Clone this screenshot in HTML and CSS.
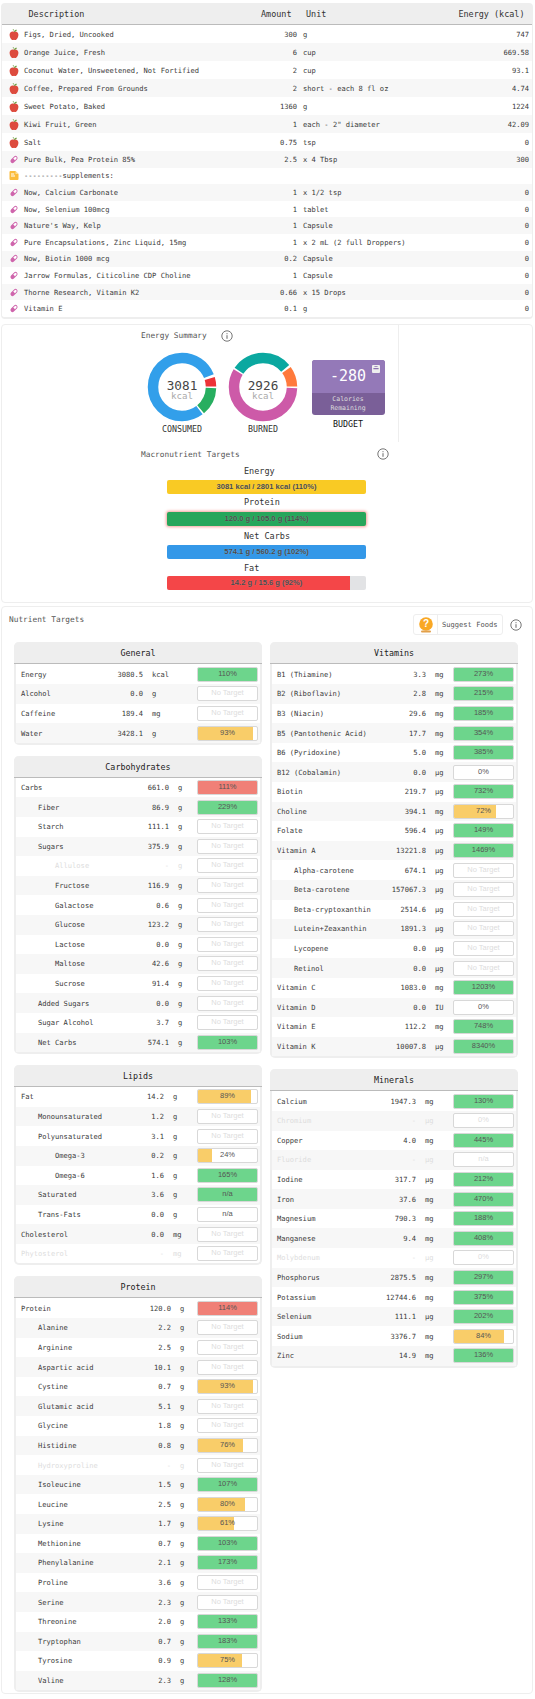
FILE: index.html
```html
<!DOCTYPE html>
<html lang="en">
<head>
<meta charset="UTF-8">
<title>Diary</title>
<link rel="stylesheet" href="styles.css">
</head>
<body>
<svg class="defs" width="0" height="0">
  <symbol id="apple" viewBox="0 0 10 12">
    <path d="M5 3C3.6 2.2 0.4 2.4 0.2 6C0.1 9 2 12 3.5 12C4.2 12 4.6 11.7 5 11.7C5.4 11.7 5.8 12 6.5 12C8 12 9.9 9 9.8 6C9.6 2.4 6.4 2.2 5 3Z" fill="#dd4b3e"/>
    <path d="M5 3.2C4.9 1.8 4.4 0.8 3.4 0.3L4 0C5 0.5 5.4 1.6 5.4 2.6C6 1.2 7.2 0.8 8.2 1C7.8 2.2 6.6 3 5 3.2Z" fill="#6d9e3f"/>
  </symbol>
  <symbol id="pill" viewBox="-1 -1 12 12">
    <g transform="rotate(-45 5 5)">
      <rect x="0" y="2.6" width="10" height="4.8" rx="2.4" fill="#cf65ac"/>
      <path d="M5.2 3.6H7.6A1.4 1.4 0 0 1 7.6 6.4H5.2Z" fill="#fff"/>
    </g>
  </symbol>
  <symbol id="note" viewBox="0 0 10 10">
    <path d="M1.5 0.5H6.5L9.5 3.5V8.5A1 1 0 0 1 8.5 9.5H1.5A1 1 0 0 1 0.5 8.5V1.5A1 1 0 0 1 1.5 0.5Z" fill="#fbbc3c"/>
    <path d="M2 3H5.2V4H2ZM2 5H6V6H2Z" fill="#fff"/>
    <path d="M6.5 0.5L9.5 3.5H6.5Z" fill="#fde09a"/>
  </symbol>
  <symbol id="info" viewBox="0 0 12 12">
    <circle cx="6" cy="6" r="5.2" fill="none" stroke="#666" stroke-width="0.9"/>
    <rect x="5.5" y="5.2" width="1" height="3.6" fill="#666"/>
    <rect x="5.5" y="3.2" width="1" height="1" fill="#666"/>
  </symbol>
</svg>

<div class="card diary">
  <div class="diary-head">
    <span class="d-desc">Description</span>
    <span class="d-amt">Amount</span>
    <span class="d-unit">Unit</span>
    <span class="d-kcal">Energy (kcal)</span>
  </div>
  <div class="food tall"><svg class="ic"><use href="#apple"/></svg><span class="d-name">Figs, Dried, Uncooked</span><span class="d-a">300</span><span class="d-u">g</span><span class="d-e">747</span></div>
  <div class="food tall"><svg class="ic"><use href="#apple"/></svg><span class="d-name">Orange Juice, Fresh</span><span class="d-a">6</span><span class="d-u">cup</span><span class="d-e">669.58</span></div>
  <div class="food tall"><svg class="ic"><use href="#apple"/></svg><span class="d-name">Coconut Water, Unsweetened, Not Fortified</span><span class="d-a">2</span><span class="d-u">cup</span><span class="d-e">93.1</span></div>
  <div class="food tall"><svg class="ic"><use href="#apple"/></svg><span class="d-name">Coffee, Prepared From Grounds</span><span class="d-a">2</span><span class="d-u">short - each 8 fl oz</span><span class="d-e">4.74</span></div>
  <div class="food tall"><svg class="ic"><use href="#apple"/></svg><span class="d-name">Sweet Potato, Baked</span><span class="d-a">1360</span><span class="d-u">g</span><span class="d-e">1224</span></div>
  <div class="food tall"><svg class="ic"><use href="#apple"/></svg><span class="d-name">Kiwi Fruit, Green</span><span class="d-a">1</span><span class="d-u">each - 2" diameter</span><span class="d-e">42.09</span></div>
  <div class="food tall"><svg class="ic"><use href="#apple"/></svg><span class="d-name">Salt</span><span class="d-a">0.75</span><span class="d-u">tsp</span><span class="d-e">0</span></div>
  <div class="food"><svg class="ic"><use href="#pill"/></svg><span class="d-name">Pure Bulk, Pea Protein 85%</span><span class="d-a">2.5</span><span class="d-u">x 4 Tbsp</span><span class="d-e">300</span></div>
  <div class="food"><svg class="ic"><use href="#note"/></svg><span class="d-name">---------supplements:</span></div>
  <div class="food"><svg class="ic"><use href="#pill"/></svg><span class="d-name">Now, Calcium Carbonate</span><span class="d-a">1</span><span class="d-u">x 1/2 tsp</span><span class="d-e">0</span></div>
  <div class="food"><svg class="ic"><use href="#pill"/></svg><span class="d-name">Now, Selenium 100mcg</span><span class="d-a">1</span><span class="d-u">tablet</span><span class="d-e">0</span></div>
  <div class="food"><svg class="ic"><use href="#pill"/></svg><span class="d-name">Nature's Way, Kelp</span><span class="d-a">1</span><span class="d-u">Capsule</span><span class="d-e">0</span></div>
  <div class="food"><svg class="ic"><use href="#pill"/></svg><span class="d-name">Pure Encapsulations, Zinc Liquid, 15mg</span><span class="d-a">1</span><span class="d-u">x 2 mL (2 full Droppers)</span><span class="d-e">0</span></div>
  <div class="food"><svg class="ic"><use href="#pill"/></svg><span class="d-name">Now, Biotin 1000 mcg</span><span class="d-a">0.2</span><span class="d-u">Capsule</span><span class="d-e">0</span></div>
  <div class="food"><svg class="ic"><use href="#pill"/></svg><span class="d-name">Jarrow Formulas, Citicoline CDP Choline</span><span class="d-a">1</span><span class="d-u">Capsule</span><span class="d-e">0</span></div>
  <div class="food"><svg class="ic"><use href="#pill"/></svg><span class="d-name">Thorne Research, Vitamin K2</span><span class="d-a">0.66</span><span class="d-u">x 15 Drops</span><span class="d-e">0</span></div>
  <div class="food"><svg class="ic"><use href="#pill"/></svg><span class="d-name">Vitamin E</span><span class="d-a">0.1</span><span class="d-u">g</span><span class="d-e">0</span></div>
</div>

<div class="card summary-card">
  <div class="energy">
    <div class="sec-title">Energy Summary <svg class="info"><use href="#info"/></svg></div>
    <div class="rings">
      <div class="ring-col">
        <div class="ring">
          <svg viewBox="0 0 70 70">
            <g fill="none" stroke-width="10.5" transform="rotate(-90 35 35)">
              <circle cx="35" cy="35" r="29" pathLength="360" stroke="#329fea" stroke-dasharray="68 75 217"/>
              <circle cx="35" cy="35" r="29" pathLength="360" stroke="#ec3237" stroke-dasharray="16 360" stroke-dashoffset="-73"/>
              <circle cx="35" cy="35" r="29" pathLength="360" stroke="#27ae60" stroke-dasharray="48 360" stroke-dashoffset="-92"/>
            </g>
          </svg>
          <div class="ring-num">3081</div>
          <div class="ring-unit">kcal</div>
        </div>
        <div class="ring-label">CONSUMED</div>
      </div>
      <div class="ring-col">
        <div class="ring">
          <svg viewBox="0 0 70 70">
            <g fill="none" stroke-width="10.5" transform="rotate(-90 35 35)">
              <circle cx="35" cy="35" r="29" pathLength="360" stroke="#cd5aa8" stroke-dasharray="209 360" stroke-dashoffset="-92"/>
              <circle cx="35" cy="35" r="29" pathLength="360" stroke="#0ba8a0" stroke-dasharray="50 254 56"/>
              <circle cx="35" cy="35" r="29" pathLength="360" stroke="#ff7a3c" stroke-dasharray="35 360" stroke-dashoffset="-54"/>
            </g>
          </svg>
          <div class="ring-num">2926</div>
          <div class="ring-unit">kcal</div>
        </div>
        <div class="ring-label">BURNED</div>
      </div>
      <div class="budget-col">
        <div class="budget">
          <div class="budget-top">
            -280
            <svg class="budget-ic" viewBox="0 0 8 8"><path d="M0 1A1 1 0 0 1 1 0H7A1 1 0 0 1 8 1V7A1 1 0 0 1 7 8H1A1 1 0 0 1 0 7Z" fill="#eee"/><path d="M1.4 3H6.6V4.2H1.4ZM2.4 1.2H5.6V2H2.4Z" fill="#8c70b0"/></svg>
          </div>
          <div class="budget-bottom">Calories<br>Remaining</div>
        </div>
        <div class="budget-label">BUDGET</div>
      </div>
    </div>
  </div>
  <div class="macros">
    <div class="macro-head"><span class="sec-title">Macronutrient Targets</span><svg class="info"><use href="#info"/></svg></div>
    <div class="macro-label">Energy</div>
    <div class="macro-bar yellow">3081 kcal / 2801 kcal (110%)</div>
    <div class="macro-label">Protein</div>
    <div class="macro-bar green over">120.0 g / 105.0 g (114%)</div>
    <div class="macro-label">Net Carbs</div>
    <div class="macro-bar blue">574.1 g / 560.2 g (102%)</div>
    <div class="macro-label">Fat</div>
    <div class="macro-bar track"><span class="macro-fill"></span><span class="macro-text">14.2 g / 15.6 g (92%)</span></div>
  </div>
</div>

<div class="card targets">
  <div class="targets-head">
    <span class="sec-title">Nutrient Targets</span>
    <div class="suggest">
      <span class="suggest-ic">
        <svg viewBox="0 0 16 16"><circle cx="8" cy="7" r="6.8" fill="#f9a825"/><rect x="3" y="13.4" width="10" height="2" rx="1" fill="#e2a04a"/><text x="8" y="10.4" class="q">?</text></svg>
      </span>
      <span class="suggest-text">Suggest Foods</span>
    </div>
    <svg class="info"><use href="#info"/></svg>
  </div>
  <div class="cols">
    <div class="col">
      <div class="box general">
        <div class="box-head">General</div>
        <div class="row"><span class="name">Energy</span><span class="val">3080.5</span><span class="unit">kcal</span><span class="bar good">110%</span></div>
        <div class="row"><span class="name">Alcohol</span><span class="val">0.0</span><span class="unit">g</span><span class="bar none">No Target</span></div>
        <div class="row"><span class="name">Caffeine</span><span class="val">189.4</span><span class="unit">mg</span><span class="bar none">No Target</span></div>
        <div class="row"><span class="name">Water</span><span class="val">3428.1</span><span class="unit">g</span><span class="bar"><span class="fill" style="width:93%"></span><span class="pct">93%</span></span></div>
      </div>
      <div class="box carbs">
        <div class="box-head">Carbohydrates</div>
        <div class="row"><span class="name">Carbs</span><span class="val">661.0</span><span class="unit">g</span><span class="bar over">111%</span></div>
        <div class="row"><span class="name in1">Fiber</span><span class="val">86.9</span><span class="unit">g</span><span class="bar good">229%</span></div>
        <div class="row"><span class="name in1">Starch</span><span class="val">111.1</span><span class="unit">g</span><span class="bar none">No Target</span></div>
        <div class="row"><span class="name in1">Sugars</span><span class="val">375.9</span><span class="unit">g</span><span class="bar none">No Target</span></div>
        <div class="row off"><span class="name in2">Allulose</span><span class="val">-</span><span class="unit">g</span><span class="bar none">No Target</span></div>
        <div class="row"><span class="name in2">Fructose</span><span class="val">116.9</span><span class="unit">g</span><span class="bar none">No Target</span></div>
        <div class="row"><span class="name in2">Galactose</span><span class="val">0.6</span><span class="unit">g</span><span class="bar none">No Target</span></div>
        <div class="row"><span class="name in2">Glucose</span><span class="val">123.2</span><span class="unit">g</span><span class="bar none">No Target</span></div>
        <div class="row"><span class="name in2">Lactose</span><span class="val">0.0</span><span class="unit">g</span><span class="bar none">No Target</span></div>
        <div class="row"><span class="name in2">Maltose</span><span class="val">42.6</span><span class="unit">g</span><span class="bar none">No Target</span></div>
        <div class="row"><span class="name in2">Sucrose</span><span class="val">91.4</span><span class="unit">g</span><span class="bar none">No Target</span></div>
        <div class="row"><span class="name in1">Added Sugars</span><span class="val">0.0</span><span class="unit">g</span><span class="bar none">No Target</span></div>
        <div class="row"><span class="name in1">Sugar Alcohol</span><span class="val">3.7</span><span class="unit">g</span><span class="bar none">No Target</span></div>
        <div class="row"><span class="name in1">Net Carbs</span><span class="val">574.1</span><span class="unit">g</span><span class="bar good">103%</span></div>
      </div>
      <div class="box lipids">
        <div class="box-head">Lipids</div>
        <div class="row"><span class="name">Fat</span><span class="val">14.2</span><span class="unit">g</span><span class="bar"><span class="fill" style="width:89%"></span><span class="pct">89%</span></span></div>
        <div class="row"><span class="name in1">Monounsaturated</span><span class="val">1.2</span><span class="unit">g</span><span class="bar none">No Target</span></div>
        <div class="row"><span class="name in1">Polyunsaturated</span><span class="val">3.1</span><span class="unit">g</span><span class="bar none">No Target</span></div>
        <div class="row"><span class="name in2">Omega-3</span><span class="val">0.2</span><span class="unit">g</span><span class="bar"><span class="fill" style="width:24%"></span><span class="pct">24%</span></span></div>
        <div class="row"><span class="name in2">Omega-6</span><span class="val">1.6</span><span class="unit">g</span><span class="bar good">165%</span></div>
        <div class="row"><span class="name in1">Saturated</span><span class="val">3.6</span><span class="unit">g</span><span class="bar good">n/a</span></div>
        <div class="row"><span class="name in1">Trans-Fats</span><span class="val">0.0</span><span class="unit">g</span><span class="bar">n/a</span></div>
        <div class="row"><span class="name">Cholesterol</span><span class="val">0.0</span><span class="unit">mg</span><span class="bar none">No Target</span></div>
        <div class="row off"><span class="name">Phytosterol</span><span class="val">-</span><span class="unit">mg</span><span class="bar none">No Target</span></div>
      </div>
      <div class="box protein">
        <div class="box-head">Protein</div>
        <div class="row"><span class="name">Protein</span><span class="val">120.0</span><span class="unit">g</span><span class="bar over">114%</span></div>
        <div class="row"><span class="name in1">Alanine</span><span class="val">2.2</span><span class="unit">g</span><span class="bar none">No Target</span></div>
        <div class="row"><span class="name in1">Arginine</span><span class="val">2.5</span><span class="unit">g</span><span class="bar none">No Target</span></div>
        <div class="row"><span class="name in1">Aspartic acid</span><span class="val">10.1</span><span class="unit">g</span><span class="bar none">No Target</span></div>
        <div class="row"><span class="name in1">Cystine</span><span class="val">0.7</span><span class="unit">g</span><span class="bar"><span class="fill" style="width:93%"></span><span class="pct">93%</span></span></div>
        <div class="row"><span class="name in1">Glutamic acid</span><span class="val">5.1</span><span class="unit">g</span><span class="bar none">No Target</span></div>
        <div class="row"><span class="name in1">Glycine</span><span class="val">1.8</span><span class="unit">g</span><span class="bar none">No Target</span></div>
        <div class="row"><span class="name in1">Histidine</span><span class="val">0.8</span><span class="unit">g</span><span class="bar"><span class="fill" style="width:76%"></span><span class="pct">76%</span></span></div>
        <div class="row off"><span class="name in1">Hydroxyproline</span><span class="val">-</span><span class="unit">g</span><span class="bar none">No Target</span></div>
        <div class="row"><span class="name in1">Isoleucine</span><span class="val">1.5</span><span class="unit">g</span><span class="bar good">107%</span></div>
        <div class="row"><span class="name in1">Leucine</span><span class="val">2.5</span><span class="unit">g</span><span class="bar"><span class="fill" style="width:80%"></span><span class="pct">80%</span></span></div>
        <div class="row"><span class="name in1">Lysine</span><span class="val">1.7</span><span class="unit">g</span><span class="bar"><span class="fill" style="width:61%"></span><span class="pct">61%</span></span></div>
        <div class="row"><span class="name in1">Methionine</span><span class="val">0.7</span><span class="unit">g</span><span class="bar good">103%</span></div>
        <div class="row"><span class="name in1">Phenylalanine</span><span class="val">2.1</span><span class="unit">g</span><span class="bar good">173%</span></div>
        <div class="row"><span class="name in1">Proline</span><span class="val">3.6</span><span class="unit">g</span><span class="bar none">No Target</span></div>
        <div class="row"><span class="name in1">Serine</span><span class="val">2.3</span><span class="unit">g</span><span class="bar none">No Target</span></div>
        <div class="row"><span class="name in1">Threonine</span><span class="val">2.0</span><span class="unit">g</span><span class="bar good">133%</span></div>
        <div class="row"><span class="name in1">Tryptophan</span><span class="val">0.7</span><span class="unit">g</span><span class="bar good">183%</span></div>
        <div class="row"><span class="name in1">Tyrosine</span><span class="val">0.9</span><span class="unit">g</span><span class="bar"><span class="fill" style="width:75%"></span><span class="pct">75%</span></span></div>
        <div class="row"><span class="name in1">Valine</span><span class="val">2.3</span><span class="unit">g</span><span class="bar good">128%</span></div>
      </div>
    </div>
    <div class="col">
      <div class="box vitamins">
        <div class="box-head">Vitamins</div>
        <div class="row"><span class="name">B1 (Thiamine)</span><span class="val">3.3</span><span class="unit">mg</span><span class="bar good">273%</span></div>
        <div class="row"><span class="name">B2 (Riboflavin)</span><span class="val">2.8</span><span class="unit">mg</span><span class="bar good">215%</span></div>
        <div class="row"><span class="name">B3 (Niacin)</span><span class="val">29.6</span><span class="unit">mg</span><span class="bar good">185%</span></div>
        <div class="row"><span class="name">B5 (Pantothenic Acid)</span><span class="val">17.7</span><span class="unit">mg</span><span class="bar good">354%</span></div>
        <div class="row"><span class="name">B6 (Pyridoxine)</span><span class="val">5.0</span><span class="unit">mg</span><span class="bar good">385%</span></div>
        <div class="row"><span class="name">B12 (Cobalamin)</span><span class="val">0.0</span><span class="unit">µg</span><span class="bar">0%</span></div>
        <div class="row"><span class="name">Biotin</span><span class="val">219.7</span><span class="unit">µg</span><span class="bar good">732%</span></div>
        <div class="row"><span class="name">Choline</span><span class="val">394.1</span><span class="unit">mg</span><span class="bar"><span class="fill" style="width:72%"></span><span class="pct">72%</span></span></div>
        <div class="row"><span class="name">Folate</span><span class="val">596.4</span><span class="unit">µg</span><span class="bar good">149%</span></div>
        <div class="row"><span class="name">Vitamin A</span><span class="val">13221.8</span><span class="unit">µg</span><span class="bar good">1469%</span></div>
        <div class="row"><span class="name in1">Alpha-carotene</span><span class="val">674.1</span><span class="unit">µg</span><span class="bar none">No Target</span></div>
        <div class="row"><span class="name in1">Beta-carotene</span><span class="val">157067.3</span><span class="unit">µg</span><span class="bar none">No Target</span></div>
        <div class="row"><span class="name in1">Beta-cryptoxanthin</span><span class="val">2514.6</span><span class="unit">µg</span><span class="bar none">No Target</span></div>
        <div class="row"><span class="name in1">Lutein+Zeaxanthin</span><span class="val">1891.3</span><span class="unit">µg</span><span class="bar none">No Target</span></div>
        <div class="row"><span class="name in1">Lycopene</span><span class="val">0.0</span><span class="unit">µg</span><span class="bar none">No Target</span></div>
        <div class="row"><span class="name in1">Retinol</span><span class="val">0.0</span><span class="unit">µg</span><span class="bar none">No Target</span></div>
        <div class="row"><span class="name">Vitamin C</span><span class="val">1083.0</span><span class="unit">mg</span><span class="bar good">1203%</span></div>
        <div class="row"><span class="name">Vitamin D</span><span class="val">0.0</span><span class="unit">IU</span><span class="bar">0%</span></div>
        <div class="row"><span class="name">Vitamin E</span><span class="val">112.2</span><span class="unit">mg</span><span class="bar good">748%</span></div>
        <div class="row"><span class="name">Vitamin K</span><span class="val">10007.8</span><span class="unit">µg</span><span class="bar good">8340%</span></div>
      </div>
      <div class="box minerals">
        <div class="box-head">Minerals</div>
        <div class="row"><span class="name">Calcium</span><span class="val">1947.3</span><span class="unit">mg</span><span class="bar good">130%</span></div>
        <div class="row off"><span class="name">Chromium</span><span class="val">-</span><span class="unit">µg</span><span class="bar none">0%</span></div>
        <div class="row"><span class="name">Copper</span><span class="val">4.0</span><span class="unit">mg</span><span class="bar good">445%</span></div>
        <div class="row off"><span class="name">Fluoride</span><span class="val">-</span><span class="unit">µg</span><span class="bar none">n/a</span></div>
        <div class="row"><span class="name">Iodine</span><span class="val">317.7</span><span class="unit">µg</span><span class="bar good">212%</span></div>
        <div class="row"><span class="name">Iron</span><span class="val">37.6</span><span class="unit">mg</span><span class="bar good">470%</span></div>
        <div class="row"><span class="name">Magnesium</span><span class="val">790.3</span><span class="unit">mg</span><span class="bar good">188%</span></div>
        <div class="row"><span class="name">Manganese</span><span class="val">9.4</span><span class="unit">mg</span><span class="bar good">408%</span></div>
        <div class="row off"><span class="name">Molybdenum</span><span class="val">-</span><span class="unit">µg</span><span class="bar none">0%</span></div>
        <div class="row"><span class="name">Phosphorus</span><span class="val">2875.5</span><span class="unit">mg</span><span class="bar good">297%</span></div>
        <div class="row"><span class="name">Potassium</span><span class="val">12744.6</span><span class="unit">mg</span><span class="bar good">375%</span></div>
        <div class="row"><span class="name">Selenium</span><span class="val">111.1</span><span class="unit">µg</span><span class="bar good">202%</span></div>
        <div class="row"><span class="name">Sodium</span><span class="val">3376.7</span><span class="unit">mg</span><span class="bar"><span class="fill" style="width:84%"></span><span class="pct">84%</span></span></div>
        <div class="row"><span class="name">Zinc</span><span class="val">14.9</span><span class="unit">mg</span><span class="bar good">136%</span></div>
      </div>
    </div>
  </div>
</div>
</body>
</html>
```

FILE: styles.css
```css
*{
  box-sizing:border-box;
}
body{
  margin:0;
  padding:3px 2px 0 1px;
  background-color:#ffffff;
  color:#3a3a3a;
  font-family:"DejaVu Sans Mono","Liberation Mono",monospace;
  font-size:7.1px;
}
.defs{
  position:absolute;
}
.card{
  border:1px solid #eeeeee;
  border-radius:4px;
  background-color:#fff;
}

/* diary table */
.diary{
  border-bottom-width:2px;
}
.diary-head{
  display:flex;
  align-items:center;
  height:21px;
  background-color:#eeeeee;
  border-bottom:1px solid #bbbbbb;
  font-size:8.45px;
  color:#333;
}
.d-desc{
  margin-left:26.5px;
  width:232.5px;
}
.d-amt{
  width:30.5px;
  text-align:right;
}
.d-unit{
  margin-left:14.5px;
  flex:1;
}
.d-kcal{
  margin-right:7.5px;
}
.food{
  display:flex;
  align-items:center;
  height:16.6px;
}
.food.tall{
  height:18px;
}
.food:nth-of-type(odd){
  background-color:#f7f7f7;
}
.ic{
  width:10px;
  height:11px;
  margin-left:7px;
  margin-right:5px;
  flex:none;
}
.d-name{
  width:255px;
}
.d-a{
  width:18px;
  text-align:right;
  white-space:nowrap;
}
.d-u{
  margin-left:6px;
  flex:1;
}
.d-e{
  margin-right:3px;
}

/* summary */
.sec-title{
  font-size:7.8px;
  color:#555;
}
.info{
  width:12px;
  height:12px;
  vertical-align:middle;
}
.summary-card{
  margin-top:5.5px;
  height:279px;
}
.energy{
  width:397px;
  height:117px;
  padding:5px 0 0 139px;
  border-right:1px solid #eeeeee;
}
.energy .sec-title .info{
  margin-left:10px;
}
.rings{
  display:flex;
  margin-top:10px;
}
.ring-col{
  width:70px;
  margin-right:11px;
  text-align:center;
}
.ring{
  position:relative;
  width:70px;
  height:70px;
  margin-left:6px;
}
.ring svg{
  display:block;
  width:70px;
  height:70px;
}
.ring-num{
  position:absolute;
  top:26px;
  left:0;
  width:100%;
  font-size:12.7px;
  line-height:15px;
  color:#444;
}
.ring-unit{
  position:absolute;
  top:39px;
  left:0;
  width:100%;
  font-size:9.1px;
  line-height:11px;
  color:#aaaaaa;
}
.ring-label,.budget-label{
  font-size:8.3px;
  line-height:10px;
  color:#333;
}
.ring-label{
  width:70px;
  margin:2px 0 0 6px;
}
.budget-col{
  margin:8px 0 0 8.5px;
  width:73px;
  text-align:center;
}
.budget-label{
  margin:4px 0 0;
  color:#111;
}
.budget{
  height:55px;
  border-radius:3px;
  overflow:hidden;
  background-color:#7a5f98;
  color:#dddddd;
}
.budget-top{
  position:relative;
  height:33px;
  background-color:#9479b8;
  color:#fff;
  font-size:15px;
  line-height:33px;
}
.budget-ic{
  position:absolute;
  top:5px;
  right:5px;
  width:8px;
  height:8px;
}
.budget-bottom{
  font-size:6.5px;
  line-height:9px;
  padding-top:2px;
}
.macros{
  padding-left:139px;
  width:394px;
}
.macro-head{
  display:flex;
  justify-content:space-between;
  align-items:center;
  height:23.5px;
  width:248px;
}
.macro-label{
  margin:0 0 0 103px;
  font-size:8.5px;
  line-height:10px;
  height:11px;
  color:#333;
}
.macro-bar{
  position:relative;
  margin:3.8px 0 3.2px 26px;
  width:199px;
  height:14px;
  border-radius:2px;
  text-align:center;
  font-family:"Liberation Sans",Arial,sans-serif;
  font-size:7.6px;
  font-weight:bold;
  line-height:14px;
  color:#4a4a4a;
  text-shadow:0 0 1px rgba(255,255,255,.35);
}
.macro-bar.yellow{
  background-color:#f9ca24;
  margin:3.5px 0 2.7px 26px;
  height:13.5px;
}
.macro-bar.green{
  background-color:#26a65b;
  margin:4.8px 0 4.2px 26px;
}
.macro-bar.over{
  box-shadow:0 0 3px 1px #f4a09a;
}
.macro-bar.blue{
  background-color:#3498e8;
}
.macro-bar.track{
  background-color:#e2e3e5;
  margin-top:2.8px;
  overflow:hidden;
}
.macro-fill{
  position:absolute;
  top:0;
  left:0;
  width:92%;
  height:100%;
  background-color:#f44648;
}
.macro-text{
  position:relative;
}

/* nutrient targets */
.targets{
  margin-top:3px;
  height:1088px;
}
.targets-head{
  display:flex;
  align-items:center;
  height:35px;
  padding:0 10px 0 7px;
}
.targets-head .sec-title{
  flex:1;
  margin-top:-10px;
}
.suggest{
  display:flex;
  align-items:center;
  height:21px;
  width:90px;
  margin-right:7px;
  border:1px solid #eeeeee;
  border-radius:3px;
}
.suggest-ic{
  width:24px;
  height:100%;
  display:flex;
  align-items:center;
  justify-content:center;
  border-right:1px solid #eeeeee;
}
.suggest-ic svg{
  width:16px;
  height:16px;
}
.q{
  font-family:"Liberation Sans",Arial,sans-serif;
  font-size:10px;
  font-weight:bold;
  fill:#fff;
  text-anchor:middle;
}
.suggest-text{
  margin-left:4px;
  color:#555;
}
.cols{
  display:flex;
  gap:8px;
  padding-left:12px;
}
.col{
  width:248px;
}
.box{
  border:2px solid #eeeeee;
  border-top:0;
  border-radius:5px;
  margin-bottom:11px;
}
.box-head{
  margin:0 -2px;
  height:22px;
  border-radius:5px 5px 0 0;
  background-color:#eeeeee;
  border-bottom:1px solid #bbbbbb;
  text-align:center;
  font-size:8.35px;
  line-height:23px;
  color:#222;
}
.row{
  display:flex;
  align-items:center;
  height:19.6px;
  padding:0 2px 0 5px;
}
.row:nth-of-type(odd){
  background-color:#f7f7f7;
}
.name{
  flex:1;
  white-space:nowrap;
}
.in1{
  padding-left:17px;
}
.in2{
  padding-left:34px;
}
.val{
  text-align:right;
}
.unit{
  flex:none;
  margin-left:9px;
}
.off{
  color:#dddddd;
}
.bar{
  position:relative;
  flex:none;
  width:61px;
  height:15px;
  border:1px solid #d8d8d8;
  border-radius:2px;
  background-color:#fff;
  overflow:hidden;
  text-align:center;
  font-family:"Liberation Sans",Arial,sans-serif;
  font-size:7.5px;
  line-height:12px;
  color:#555;
}
.bar.good{
  background-color:#6dd58c;
}
.bar.over{
  background-color:#f08077;
}
.bar.none{
  color:#dddddd;
}
.fill{
  position:absolute;
  top:0;
  left:0;
  height:100%;
  background-color:#f9cd69;
}
.pct{
  position:relative;
}
.general .unit{
  width:45px;
}
.carbs .unit{
  width:19px;
}
.lipids .unit{
  width:24px;
}
.protein .unit{
  width:17px;
}
.vitamins .unit{
  width:18px;
}
.minerals .unit{
  width:28px;
}
```
